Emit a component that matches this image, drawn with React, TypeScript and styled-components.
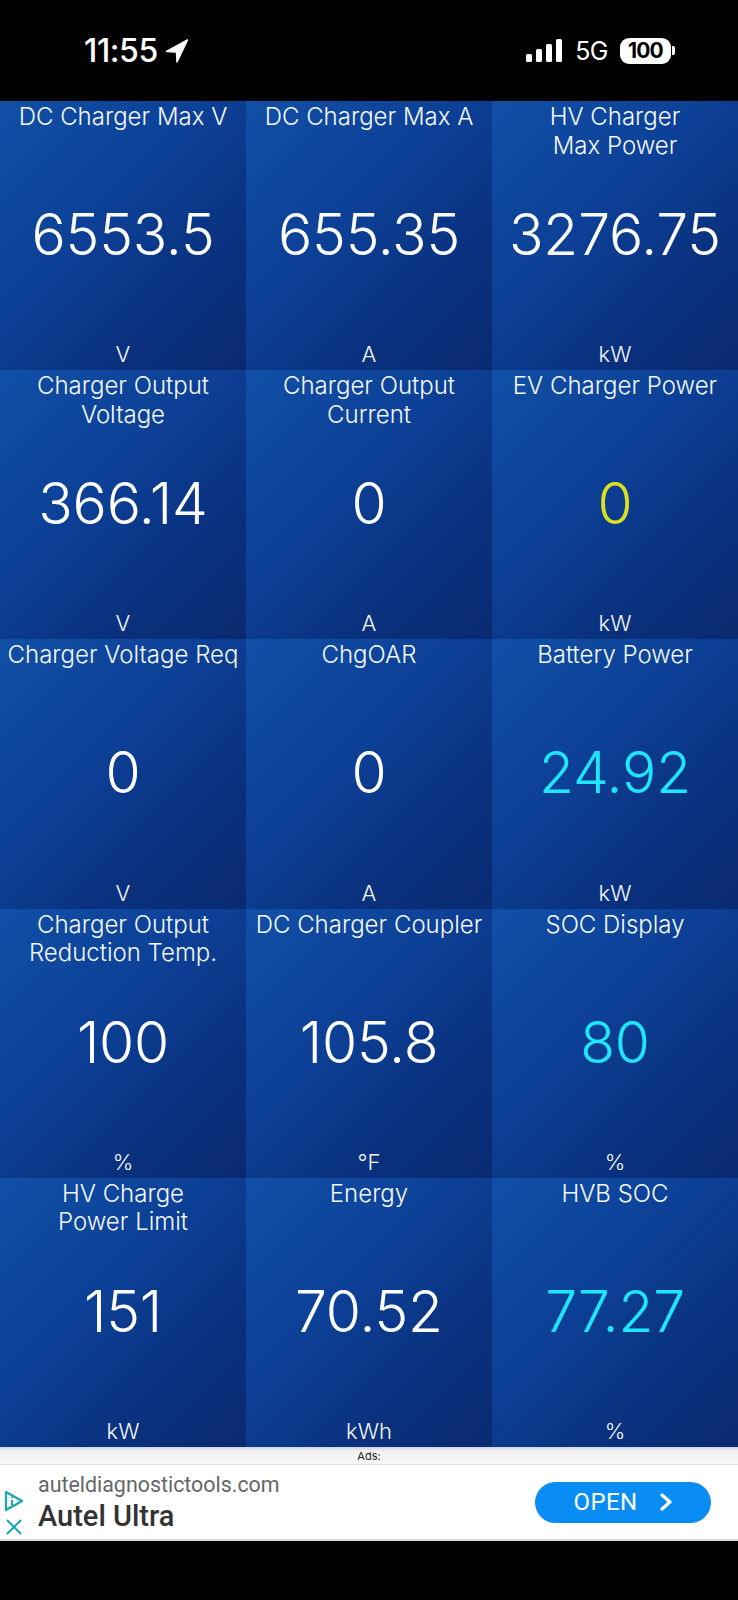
import * as React from "react";
import styled, { createGlobalStyle } from "styled-components";

const GlobalStyle = createGlobalStyle`
  html, body {
    margin: 0;
    padding: 0;
    background: #000;
  }
  body {
    font-family: Inter, "Liberation Sans", sans-serif;
  }
`;

type Tile = { label: string; value: string; unit: string; tone?: "yellow" | "cyan" };

const tiles: Tile[] = [
  { label: "DC Charger Max V", value: "6553.5", unit: "V" },
  { label: "DC Charger Max A", value: "655.35", unit: "A" },
  { label: "HV Charger\nMax Power", value: "3276.75", unit: "kW" },
  { label: "Charger Output\nVoltage", value: "366.14", unit: "V" },
  { label: "Charger Output\nCurrent", value: "0", unit: "A" },
  { label: "EV Charger Power", value: "0", unit: "kW", tone: "yellow" },
  { label: "Charger Voltage Req", value: "0", unit: "V" },
  { label: "ChgOAR", value: "0", unit: "A" },
  { label: "Battery Power", value: "24.92", unit: "kW", tone: "cyan" },
  { label: "Charger Output\nReduction Temp.", value: "100", unit: "%" },
  { label: "DC Charger Coupler", value: "105.8", unit: "°F" },
  { label: "SOC Display", value: "80", unit: "%", tone: "cyan" },
  { label: "HV Charge\nPower Limit", value: "151", unit: "kW" },
  { label: "Energy", value: "70.52", unit: "kWh" },
  { label: "HVB SOC", value: "77.27", unit: "%", tone: "cyan" },
];

const toneColors = { yellow: "#d9e021", cyan: "#1fe6ff" };

const Page = styled.div`
  width: 738px;
  height: 1600px;
  display: flex;
  flex-direction: column;
  background: #000;
  overflow: hidden;
`;

const StatusBar = styled.div`
  height: 101px;
  flex: none;
  display: flex;
  align-items: center;
  justify-content: space-between;
  padding: 0 63px 0 84px;
  box-sizing: border-box;
  color: #fff;
`;

const TimeGroup = styled.div`
  display: flex;
  align-items: center;
  gap: 7px;
`;

const Time = styled.span`
  font-size: 32px;
  font-weight: 500;
  letter-spacing: -0.4px;
`;

const StatusIcons = styled.div`
  display: flex;
  align-items: center;
  gap: 12px;
`;

const Network = styled.span`
  font-size: 25px;
  font-weight: 400;
  letter-spacing: -0.5px;
`;

const Battery = styled.div`
  display: flex;
  align-items: center;
  gap: 1px;
`;

const BatteryBody = styled.span`
  width: 51px;
  height: 26px;
  border-radius: 9px;
  background: #fff;
  color: #000;
  font-size: 21px;
  font-weight: 700;
  letter-spacing: -0.8px;
  line-height: 26px;
  text-align: center;
`;

const BatteryCap = styled.span`
  width: 3px;
  height: 9px;
  border-radius: 0 2px 2px 0;
  background: #fff;
`;

const Grid = styled.div`
  height: 1346px;
  flex: none;
  display: grid;
  grid-template-columns: 246px 246px 246px;
  grid-template-rows: repeat(5, 1fr);
`;

const Cell = styled.div`
  display: flex;
  flex-direction: column;
  align-items: center;
  min-height: 0;
  background: linear-gradient(135deg, #114fa6 0%, #0c4096 42%, #0a317f 72%, #0a2a70 100%);
  color: #fff;
  text-align: center;
`;

const Label = styled.div`
  height: 58px;
  width: 100%;
  padding: 2px 0 0;
  box-sizing: border-box;
  font-size: 24px;
  font-weight: 300;
  line-height: 28.5px;
  white-space: pre-line;
  color: #f4f8ff;
`;

const Value = styled.div<{ $tone?: "yellow" | "cyan" }>`
  flex: 1;
  display: flex;
  align-items: center;
  justify-content: center;
  padding-bottom: 30px;
  font-size: 57px;
  font-weight: 350;
  letter-spacing: -0.2px;
  white-space: nowrap;
  color: ${(p) => (p.$tone ? toneColors[p.$tone] : "#fff")};
`;

const Unit = styled.div`
  height: 30px;
  font-size: 22px;
  font-weight: 300;
  line-height: 28px;
  color: #f4f8ff;
`;

const AdsStrip = styled.div`
  height: 18px;
  flex: none;
  display: flex;
  align-items: center;
  justify-content: center;
  background: linear-gradient(180deg, #cfd5e4 0%, #f2f2f2 25%, #f7f7f7 100%);
  border-bottom: 1px solid #dedede;
  box-sizing: border-box;
  font-size: 11px;
  color: #222;
`;

const AdBar = styled.div`
  height: 76px;
  flex: none;
  display: flex;
  align-items: center;
  background: #fff;
  border-bottom: 2px solid #d8d8d8;
  box-sizing: border-box;
`;

const AdMarks = styled.div`
  width: 38px;
  flex: none;
  display: flex;
  flex-direction: column;
  align-items: center;
  align-self: flex-end;
  gap: 7px;
  padding: 0 13px 4px 3px;
  box-sizing: border-box;
`;

const AdText = styled.div`
  flex: 1;
  display: flex;
  flex-direction: column;
  gap: 3px;
  padding-top: 1px;
`;

const AdDomain = styled.div`
  font-family: Roboto, sans-serif;
  font-size: 21.4px;
  line-height: 24px;
  color: #666;
`;

const AdTitle = styled.div`
  font-family: Roboto, sans-serif;
  font-size: 29px;
  font-weight: 500;
  line-height: 32px;
  color: #333;
`;

const OpenButton = styled.div`
  width: 176px;
  height: 41px;
  margin-right: 27px;
  border-radius: 21px;
  background: #0a8cf5;
  color: #fff;
  display: flex;
  align-items: center;
  justify-content: center;
  gap: 21px;
  font-family: Roboto, sans-serif;
  font-size: 24px;
  letter-spacing: 0.4px;
`;

const App: React.FC = () => (
  <Page>
    <GlobalStyle />
    <StatusBar>
      <TimeGroup>
        <Time>11:55</Time>
        <svg width="24" height="24" viewBox="0 0 23 24">
          <path d="M22 1 L1 12.5 L11 13 L11.5 23 Z" fill="#fff" stroke="#fff" strokeWidth="1.5" strokeLinejoin="round" />
        </svg>
      </TimeGroup>
      <StatusIcons>
        <svg width="37" height="24" viewBox="0 0 37 24">
          <rect x="0" y="15" width="6" height="8" rx="1.5" fill="#fff" />
          <rect x="10" y="10" width="6" height="13" rx="1.5" fill="#fff" />
          <rect x="20" y="5" width="6" height="18" rx="1.5" fill="#fff" />
          <rect x="30" y="0" width="6" height="23" rx="1.5" fill="#fff" />
        </svg>
        <Network>5G</Network>
        <Battery>
          <BatteryBody>100</BatteryBody>
          <BatteryCap />
        </Battery>
      </StatusIcons>
    </StatusBar>
    <Grid>
      {tiles.map((t) => (
        <Cell key={t.label}>
          <Label>{t.label}</Label>
          <Value $tone={t.tone}>{t.value}</Value>
          <Unit>{t.unit}</Unit>
        </Cell>
      ))}
    </Grid>
    <AdsStrip>Ads:</AdsStrip>
    <AdBar>
      <AdMarks>
        <svg width="20" height="22" viewBox="0 0 20 22" fill="none" stroke="#16a6b6" strokeWidth="2.2" strokeLinejoin="round">
          <path d="M2 2 L18 11 L2 20 Z" />
          <path d="M8 10 V15 M8 6.5 V8" strokeWidth="2" />
        </svg>
        <svg width="16" height="16" viewBox="0 0 16 16" fill="none" stroke="#16a6b6" strokeWidth="2">
          <path d="M1 1 L15 15 M15 1 L1 15" />
        </svg>
      </AdMarks>
      <AdText>
        <AdDomain>auteldiagnostictools.com</AdDomain>
        <AdTitle>Autel Ultra</AdTitle>
      </AdText>
      <OpenButton>
        OPEN
        <svg width="14" height="20" viewBox="0 0 14 20" fill="none" stroke="#fff" strokeWidth="3.4" strokeLinecap="round" strokeLinejoin="round">
          <path d="M3 3 L11 10 L3 17" />
        </svg>
      </OpenButton>
    </AdBar>
  </Page>
);

export default App;
